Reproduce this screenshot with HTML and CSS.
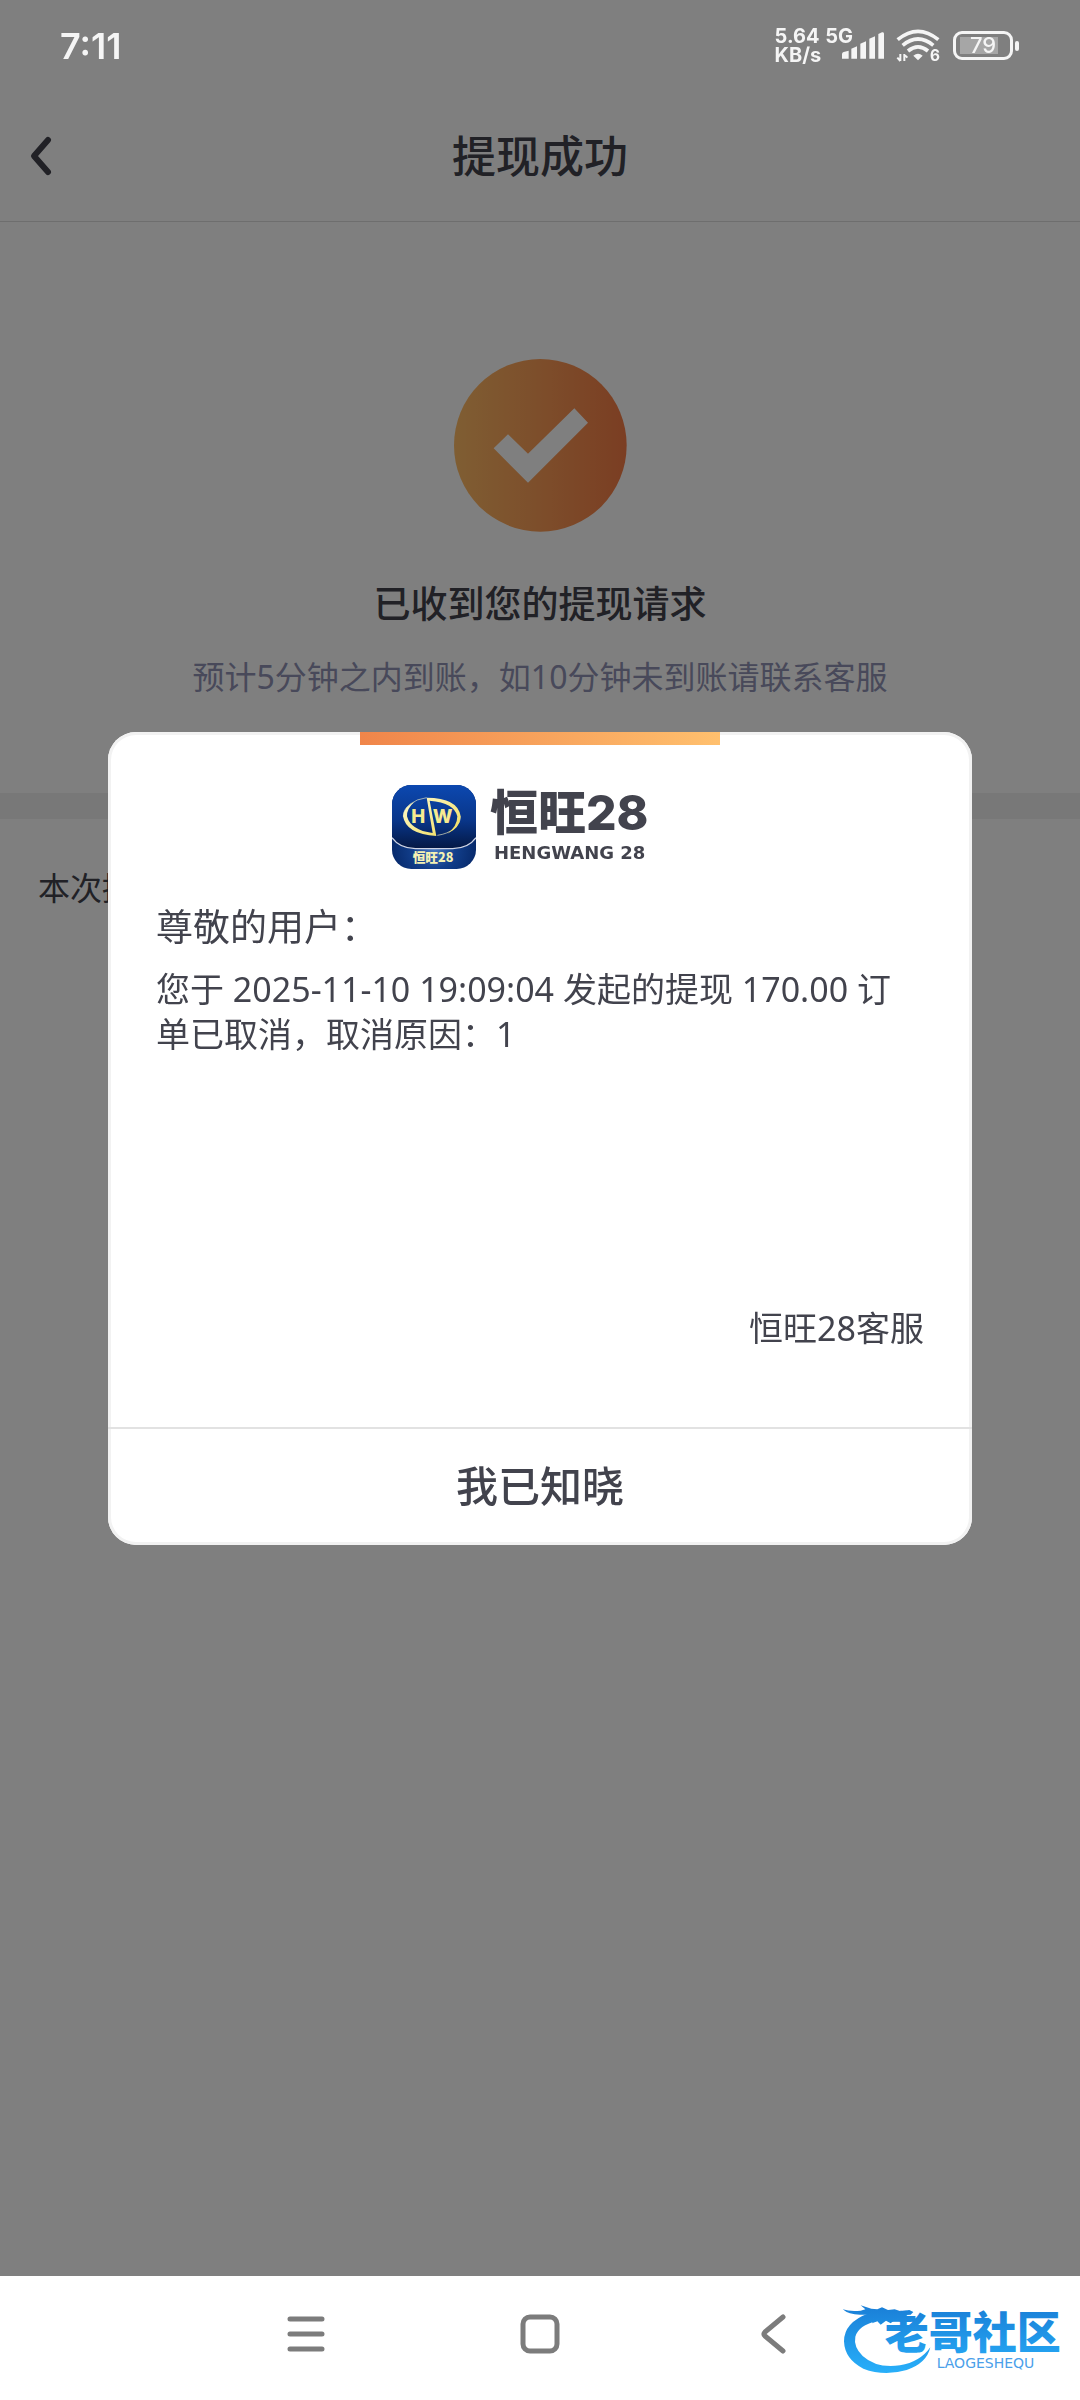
FILE: index.html
```html
<!DOCTYPE html>
<html lang="zh-CN">
<head>
    <meta charset="UTF-8">
    <meta name="viewport" content="width=device-width, initial-scale=1.0">
    <title>提现成功</title>
    <link rel="stylesheet" href="styles.css">
</head>
<body>
    <div class="status-bar">
        <span class="time">7:11</span>
        <div class="status-right">
            <span class="speed">5.64<br>KB/s</span>
            <span class="network">5G</span>
            <svg class="signal" width="42" height="27" viewBox="0 0 126 81" fill="#f5f5f5">
                <path d="M0 66q0-5 5-6l15-4v24H0z"/>
                <path d="M28 50l17-7v37H28z"/>
                <path d="M55 35l17-7v52H55z"/>
                <path d="M82 20l17-7v67H82z"/>
                <path d="M109 6l11-5q6-2 6 4v75h-17z"/>
            </svg>
            <svg class="wifi" width="44" height="36" viewBox="0 0 132 108">
                <g fill="none" stroke="#f5f5f5" stroke-width="11">
                    <path d="M5 35Q66-15 127 35"/>
                    <path d="M20 52Q66 14 112 52"/>
                    <path d="M36 69Q66 44 96 69"/>
                </g>
                <path d="M52 83Q66 71 80 83L66 97z" fill="#f5f5f5"/>
                <path d="M13 78v21M4 89l9 10M25 99V78M25 80l9 9" fill="none" stroke="#f5f5f5" stroke-width="6"/>
                <text class="wifi-num" x="102" y="99">6</text>
            </svg>
            <div class="battery">79</div>
        </div>
    </div>

    <header class="header">
        <button class="back" aria-label="返回">
            <svg width="24" height="42" viewBox="0 0 24 42">
                <path d="M19 5L5 21l14 16" fill="none" stroke="#42434d" stroke-width="6" stroke-linecap="round" stroke-linejoin="round"/>
            </svg>
        </button>
        <h1>提现成功</h1>
    </header>

    <main>
        <section class="result">
            <svg class="result-icon" viewBox="0 0 519 519">
                <defs>
                    <linearGradient id="ok" x1="0" x2="1">
                        <stop offset="0" stop-color="#ffbc66"/>
                        <stop offset="1" stop-color="#f67c46"/>
                    </linearGradient>
                </defs>
                <circle cx="259" cy="259" r="259" fill="url(#ok)"/>
                <path d="M361 148l41 43-180 180L119 268l43-42 60 58z" fill="#fff"/>
            </svg>
            <h2>已收到您的提现请求</h2>
            <p>预计5分钟之内到账，如10分钟未到账请联系客服</p>
        </section>
        <section class="detail">本次提现</section>
    </main>

    <!-- Dialog -->
    <div class="overlay">
        <div class="dialog" role="dialog" aria-modal="true">
            <div class="accent"></div>
            <div class="brand">
                <svg class="brand-icon" viewBox="0 0 252 252">
                    <defs>
                        <linearGradient id="top" x1="0" y1="0" x2="0" y2="1">
                            <stop offset="0" stop-color="#0c48b0"/>
                            <stop offset=".55" stop-color="#09368a"/>
                            <stop offset="1" stop-color="#041844"/>
                        </linearGradient>
                        <radialGradient id="bottom" cx=".5" cy=".75" r=".5">
                            <stop offset="0" stop-color="#4a7cc4"/>
                            <stop offset=".5" stop-color="#123f8c"/>
                            <stop offset="1" stop-color="#072a6c"/>
                        </radialGradient>
                        <linearGradient id="gold" x1="0" y1="0" x2="1" y2="1">
                            <stop offset="0" stop-color="#fffbd0"/>
                            <stop offset="1" stop-color="#f0dc58"/>
                        </linearGradient>
                        <clipPath id="tile"><rect width="252" height="252" rx="58"/></clipPath>
                    </defs>
                    <g clip-path="url(#tile)">
                        <rect width="252" height="252" fill="url(#bottom)"/>
                        <path d="M0 0h252v158q-22 32-70 33H70Q22 190 0 158z" fill="url(#top)"/>
                        <path d="M0 158q22 32 70 33h112q48-1 70-33" fill="none" stroke="#cdd3e4" stroke-width="4"/>
                    </g>
                    <g fill="none" stroke="#e8e7c0" stroke-width="2">
                        <path d="M104 38A86 57 0 0 0 34 94"/>
                        <path d="M136 151A86 57 0 0 0 205 94"/>
                    </g>
                    <path d="M104 38Q198 38 206 94Q204 130 166 146Q196 124 196 94Q188 54 113 47L133 153Q42 148 33 94Q36 64 68 50Q44 70 45 94Q56 136 122 144z" fill="url(#gold)"/>
                    <text class="icon-hw" x="58" y="114">H</text>
                    <text class="icon-hw" x="122" y="114">W</text>
                    <text class="icon-name" x="62" y="231">恒旺28</text>
                </svg>
                <div class="brand-text">
                    <span class="brand-name">恒旺28</span>
                    <span class="brand-latin">HENGWANG 28</span>
                </div>
            </div>
            <div class="dialog-body">
                <p class="greeting">尊敬的用户：</p>
                <p class="message">您于 2025-11-10 19:09:04 发起的提现 170.00 订单已取消，取消原因：1</p>
                <p class="sign">恒旺28客服</p>
            </div>
            <button class="confirm">我已知晓</button>
        </div>
    </div>

    <nav class="nav-bar">
        <button aria-label="菜单">
            <svg width="44" height="44" viewBox="0 0 44 44">
                <path d="M6 7h32M6 22h32M6 37h32" stroke="#7c7c7c" stroke-width="5" stroke-linecap="round"/>
            </svg>
        </button>
        <button aria-label="主页">
            <svg width="44" height="44" viewBox="0 0 44 44">
                <rect x="5" y="5" width="34" height="34" rx="7" fill="none" stroke="#7c7c7c" stroke-width="5"/>
            </svg>
        </button>
        <button aria-label="返回上一页">
            <svg width="44" height="44" viewBox="0 0 44 44">
                <path d="M31 5L13 20q-2 2 0 4l18 15" fill="none" stroke="#7c7c7c" stroke-width="5" stroke-linecap="round" stroke-linejoin="round"/>
            </svg>
        </button>
        <svg class="watermark" width="230" height="90" viewBox="0 0 690 270">
            <defs>
                <linearGradient id="sea" gradientUnits="userSpaceOnUse" x1="0" y1="40" x2="0" y2="240">
                    <stop offset="0" stop-color="#1a80d8"/>
                    <stop offset="1" stop-color="#28b0fa"/>
                </linearGradient>
            </defs>
            <g fill="url(#sea)">
                <!-- body -->
                <path d="M86 58Q12 86 12 142Q14 196 70 224Q132 248 200 228Q260 208 271 160Q240 204 180 214Q110 224 68 186Q40 158 46 128Q56 94 110 82z"/>
                <!-- head -->
                <path d="M8 46Q32 54 62 50L76 46L62 34L94 44L112 46L126 40L144 48L164 46L182 52L208 48L220 54L212 62L188 64L176 70L212 76L214 84L186 84L164 78L152 88L138 80L122 92L112 82L96 88L102 76L80 74L88 62L60 62Q26 62 8 46z"/>
            </g>
            <text class="wm-name" x="134" y="165">老哥社区</text>
            <text class="wm-latin" x="290" y="222">LAOGESHEQU</text>
        </svg>
    </nav>
</body>
</html>
```
FILE: styles.css
```css
* { box-sizing: border-box; margin: 0; padding: 0; }

body {
    display: flex;
    flex-direction: column;
    min-height: 100vh;
    font-family: "Noto Sans", "Noto Sans CJK SC", sans-serif;
    background: #fff;
    color: #42434d;
}

button {
    border: none;
    background: none;
    font-family: inherit;
    color: inherit;
    cursor: pointer;
}

svg { display: block; }

/* Status bar, above the overlay */
.status-bar {
    position: relative;
    z-index: 2;
    display: flex;
    justify-content: space-between;
    align-items: center;
    height: 91px;
    padding: 0 61px 0 60px;
    color: #f5f5f5;
    font-family: Inter, "Noto Sans CJK SC", sans-serif;
}

.time { font-size: 36px; font-weight: 600; }

.status-right {
    display: flex;
    align-items: center;
}

.speed, .network {
    font-size: 20px;
    font-weight: 700;
    line-height: 19px;
}

.network {
    align-self: flex-start;
    margin-left: 4px;
}

.signal { margin: 0 12px 0 -11px; }
.wifi-num { font-size: 46px; font-weight: 700; fill: #f5f5f5; }

.battery {
    position: relative;
    width: 60px;
    height: 29px;
    margin: 0 6px 0 13px;
    border: 3px solid #f5f5f5;
    border-radius: 9px;
    background: linear-gradient(90deg, #a6a6a6 38px, transparent 38px) 4px 3px / 46px 17px no-repeat;
    font-size: 22px;
    font-weight: 500;
    line-height: 23px;
    text-align: center;
}

.battery::after {
    content: "";
    position: absolute;
    top: 7px;
    right: -9px;
    width: 4px;
    height: 10px;
    border-radius: 2px;
    background: #f5f5f5;
}

/* Header */
.header {
    display: grid;
    grid-template-columns: 84px 1fr 84px;
    align-items: center;
    height: 131px;
    border-bottom: 1px solid #dcdcdc;
}

.back {
    display: flex;
    padding: 20px 29px;
}

.header h1 {
    font-size: 44px;
    font-weight: 500;
    line-height: 60px;
    text-align: center;
}

main { flex: 1; }

.result {
    display: flex;
    flex-direction: column;
    align-items: center;
    padding: 137px 24px 92px;
    border-bottom: 26px solid #f0f0f0;
}

.result-icon { width: 173px; height: 173px; }

.result h2 {
    margin-top: 46px;
    font-size: 37px;
    font-weight: 500;
    line-height: 52px;
}

.result p {
    margin-top: 23px;
    font-size: 32px;
    line-height: 48px;
    color: #9092b4;
}

.detail {
    padding: 45px 38px;
    font-size: 32px;
    line-height: 48px;
}

/* Dialog */
.overlay {
    position: fixed;
    top: 0;
    right: 0;
    bottom: 124px;
    left: 0;
    z-index: 1;
    display: flex;
    align-items: center;
    justify-content: center;
    background: rgba(0, 0, 0, 0.5);
}

.dialog {
    width: 80%;
    border-radius: 28px;
    background: #fff;
    box-shadow: inset 0 0 0 3px #f2f2f2;
}

.accent {
    width: 360px;
    height: 13px;
    margin: 0 auto;
    background: linear-gradient(90deg, #f0854a, #ffc06e);
}

.brand {
    display: flex;
    align-items: center;
    gap: 14px;
    width: 296px;
    margin: 40px auto 0;
}

.brand-icon { width: 84px; height: 84px; }

.icon-hw {
    font-family: Inter, sans-serif;
    font-size: 56px;
    font-weight: 800;
    fill: #f6eb90;
}

.icon-name {
    font-family: "Noto Sans CJK SC", sans-serif;
    font-size: 38px;
    font-weight: 900;
    fill: #f4f2b4;
}

.brand-text {
    display: flex;
    flex-direction: column;
    gap: 4px;
}

.brand-name {
    font-family: Inter, "Noto Sans CJK SC", sans-serif;
    font-size: 48px;
    font-weight: 800;
    line-height: 48px;
}

.brand-latin {
    padding-left: 4px;
    font-family: "DejaVu Sans", sans-serif;
    font-size: 18px;
    font-weight: 700;
    line-height: 24px;
}

.dialog-body { padding: 32px 48px 76px; }

.greeting {
    font-size: 37px;
    line-height: 52px;
}

.message {
    min-height: 339px;
    margin-top: 14px;
    font-size: 34px;
    line-height: 45px;
}

.sign {
    font-size: 34px;
    line-height: 45px;
    text-align: right;
}

.confirm {
    width: 100%;
    height: 118px;
    padding-bottom: 6px;
    border-top: 2px solid #e2e2e2;
    font-size: 42px;
    font-weight: 500;
}

/* System navigation */
.nav-bar {
    position: relative;
    display: flex;
    justify-content: center;
    align-items: center;
    gap: 190px;
    height: 124px;
    padding-bottom: 8px;
}

.watermark {
    position: absolute;
    right: 10px;
    bottom: 16px;
}

.wm-name {
    font-family: "Noto Sans CJK SC", sans-serif;
    font-size: 132px;
    font-weight: 900;
    fill: url(#sea);
}

.wm-latin {
    font-family: "DejaVu Sans", sans-serif;
    font-size: 42px;
    fill: #4aa0ea;
}
```
